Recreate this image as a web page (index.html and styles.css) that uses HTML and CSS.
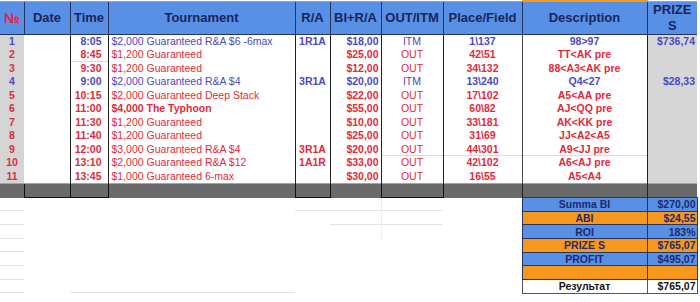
FILE: index.html
```html
<!DOCTYPE html>
<html>
<head>
<meta charset="utf-8">
<link rel="stylesheet" href="styles.css">
</head>
<body>
<table class="sheet">
  <colgroup>
    <col class="w-num"><col class="w-date"><col class="w-time"><col class="w-tour"><col class="w-ra">
    <col class="w-bi"><col class="w-out"><col class="w-place"><col class="w-desc"><col class="w-prize">
  </colgroup>
  <thead>
    <tr>
      <th class="h-num">№</th><th>Date</th><th>Time</th><th>Tournament</th><th>R/A</th>
      <th>BI+R/A</th><th>OUT/ITM</th><th>Place/Field</th><th class="h-desc">Description</th><th class="h-prize">PRIZE S</th>
    </tr>
  </thead>
  <tbody>
    <tr class="blue"><td class="num">1</td><td class="date"></td><td class="time">8:05</td><td class="tour">$2,000 Guaranteed R&amp;A $6 -6max</td><td class="ra">1R1A</td><td class="bi">$18,00</td><td class="out">ITM</td><td class="place">1\137</td><td class="desc">98&gt;97</td><td class="prize">$736,74</td></tr>
    <tr class="red"><td class="num">2</td><td class="date"></td><td class="time gl">8:45</td><td class="tour">$1,200 Guaranteed</td><td class="ra"></td><td class="bi">$25,00</td><td class="out">OUT</td><td class="place">42\51</td><td class="desc">TT&lt;AK pre</td><td class="prize"></td></tr>
    <tr class="red"><td class="num">3</td><td class="date"></td><td class="time">9:30</td><td class="tour">$1,200 Guaranteed</td><td class="ra"></td><td class="bi">$12,00</td><td class="out">OUT</td><td class="place">34\132</td><td class="desc">88&lt;A3&lt;AK pre</td><td class="prize"></td></tr>
    <tr class="blue"><td class="num">4</td><td class="date"></td><td class="time">9:00</td><td class="tour">$2,000 Guaranteed R&amp;A $4</td><td class="ra">3R1A</td><td class="bi">$20,00</td><td class="out">ITM</td><td class="place">13\240</td><td class="desc">Q4&lt;27</td><td class="prize">$28,33</td></tr>
    <tr class="red"><td class="num">5</td><td class="date"></td><td class="time">10:15</td><td class="tour">$2,000 Guaranteed Deep Stack</td><td class="ra"></td><td class="bi">$22,00</td><td class="out">OUT</td><td class="place">17\102</td><td class="desc">A5&lt;AA pre</td><td class="prize"></td></tr>
    <tr class="red"><td class="num">6</td><td class="date"></td><td class="time">11:00</td><td class="tour strong">$4,000 The Typhoon</td><td class="ra"></td><td class="bi">$55,00</td><td class="out">OUT</td><td class="place">60\82</td><td class="desc">AJ&lt;QQ pre</td><td class="prize"></td></tr>
    <tr class="red"><td class="num">7</td><td class="date"></td><td class="time">11:30</td><td class="tour">$1,200 Guaranteed</td><td class="ra"></td><td class="bi">$10,00</td><td class="out">OUT</td><td class="place">33\181</td><td class="desc">AK&lt;KK pre</td><td class="prize"></td></tr>
    <tr class="red"><td class="num">8</td><td class="date"></td><td class="time">11:40</td><td class="tour">$1,200 Guaranteed</td><td class="ra"></td><td class="bi">$25,00</td><td class="out">OUT</td><td class="place">31\69</td><td class="desc">JJ&lt;A2&lt;A5</td><td class="prize"></td></tr>
    <tr class="red"><td class="num">9</td><td class="date"></td><td class="time">12:00</td><td class="tour">$3,000 Guaranteed R&amp;A $4</td><td class="ra">3R1A</td><td class="bi">$20,00</td><td class="out gl">OUT</td><td class="place gl">44\301</td><td class="desc gl">A9&lt;JJ pre</td><td class="prize"></td></tr>
    <tr class="red"><td class="num">10</td><td class="date"></td><td class="time">13:10</td><td class="tour">$2,000 Guaranteed R&amp;A $12</td><td class="ra">1A1R</td><td class="bi">$33,00</td><td class="out">OUT</td><td class="place">42\102</td><td class="desc">A6&lt;AJ pre</td><td class="prize"></td></tr>
    <tr class="red"><td class="num">11</td><td class="date"></td><td class="time">13:45</td><td class="tour">$1,000 Guaranteed 6-max</td><td class="ra"></td><td class="bi">$30,00</td><td class="out">OUT</td><td class="place">16\55</td><td class="desc">A5&lt;A4</td><td class="prize"></td></tr>
    <tr class="band"><td></td><td class="boxed"></td><td class="boxed"></td><td></td><td class="boxed"></td><td></td><td class="boxed"></td><td></td><td class="bl"></td><td class="bl"></td></tr>
    <tr class="sum"><td class="fl"></td><td></td><td></td><td></td><td class="fl"></td><td class="fl fr"></td><td class="fl fv"></td><td></td><td class="s-label sb">Summa BI</td><td class="s-val sb">$270,00</td></tr>
    <tr class="sum"><td class="fl"></td><td></td><td></td><td></td><td></td><td class="fl fr"></td><td class="fl fv"></td><td></td><td class="s-label so">ABI</td><td class="s-val so">$24,55</td></tr>
    <tr class="sum"><td class="fl"></td><td></td><td></td><td></td><td></td><td></td><td class="fv"></td><td></td><td class="s-label sb">ROI</td><td class="s-val sb">183%</td></tr>
    <tr class="sum"><td class="fl"></td><td></td><td></td><td></td><td></td><td></td><td></td><td></td><td class="s-label so">PRIZE S</td><td class="s-val so">$765,07</td></tr>
    <tr class="sum"><td class="fl"></td><td></td><td></td><td></td><td></td><td></td><td></td><td></td><td class="s-label sb">PROFIT</td><td class="s-val sb">$495,07</td></tr>
    <tr class="sum"><td class="fl"></td><td></td><td></td><td></td><td></td><td></td><td></td><td></td><td class="s-label so"></td><td class="s-val so"></td></tr>
    <tr class="sum"><td class="fl"></td><td></td><td class="fl"></td><td class="fl"></td><td></td><td></td><td></td><td></td><td class="s-label sw">Результат</td><td class="s-val sw">$765,07</td></tr>
  </tbody>
</table>
</body>
</html>
```

FILE: styles.css
```css
html, body {
  margin: 0;
  padding: 0;
  background: #ffffff;
}

body {
  font-family: "Liberation Sans", Arial, sans-serif;
}

.sheet {
  border-collapse: collapse;
  table-layout: fixed;
  width: 697px;
}

.w-num { width: 24px; }
.w-date { width: 46px; }
.w-time { width: 38px; }
.w-tour { width: 187px; }
.w-ra { width: 35px; }
.w-bi { width: 51px; }
.w-out { width: 62px; }
.w-place { width: 79px; }
.w-desc { width: 125px; }
.w-prize { width: 50px; }

th {
  height: 31px;
  padding: 0;
  background: #5890e6;
  color: #1a245c;
  font-size: 13px;
  font-weight: bold;
  line-height: 16px;
  text-align: center;
  vertical-align: middle;
  border-left: 1px solid #27335e;
  border-bottom: 1px solid #27335e;
  border-top: 1px solid #7aa6ee;
}

th:first-child {
  border-left: none;
}

.h-num {
  color: #e61f3d;
  font-size: 14px;
}

.h-desc {
  border-top: 2px solid #f39a22;
}

.h-prize {
  line-height: 16px;
  vertical-align: top;
  padding-top: 0;
}

td {
  height: 13.5px;
  padding: 0 2px;
  font-size: 10.5px;
  line-height: 13px;
  white-space: nowrap;
  overflow: hidden;
}

.blue td { color: #4d48c4; }
.red td { color: #df2b3b; }

.num {
  background: #d5d5d5;
  text-align: center;
  font-weight: bold;
}

.time {
  border-left: 1px solid #222;
  text-align: right;
  padding-right: 6px;
  font-weight: bold;
}

.tour {
  border-left: 1px solid #222;
  padding-left: 3px;
}

.strong {
  font-weight: bold;
}

.ra {
  border-left: 1px solid #222;
  text-align: center;
  font-weight: bold;
}

.bi {
  border-left: 1px solid #222;
  text-align: right;
  padding-right: 2px;
  font-weight: bold;
}

.out {
  border-left: 1px solid #222;
  text-align: center;
}

.place {
  border-left: 1px solid #222;
  text-align: center;
  font-weight: bold;
}

.desc {
  border-left: 1px solid #444;
  text-align: center;
  font-weight: bold;
}

.prize {
  border-left: 1px solid #222;
  background: #d6d6d6;
  text-align: right;
  padding-right: 2px;
  font-weight: bold;
}

.gl {
  box-shadow: inset 0 -1px 0 #dadada;
}

.band td {
  height: 13px;
  padding: 0;
  background: #6a6a6a;
  border-top: 1px solid #a4a4a4;
}

.band td.boxed {
  border-left: 1px solid #111;
  border-right: 1px solid #111;
  border-bottom: 1px solid #111;
}

.band td.bl {
  border-left: 1px solid #222;
}

.sum td {
  height: 12.7px;
  padding: 0 1px;
  font-size: 10.5px;
  line-height: 12px;
}

.sum td.fl {
  box-shadow: inset 0 -1px 0 #e3e3e3;
}

.sum td.fr {
  border-right: 1px solid #ececec;
}

.sum td.fv {
  border-left: 1px solid #ececec;
}

.s-label {
  text-align: center;
  font-weight: bold;
  color: #1d2a70;
  border: 1px solid #2a3460;
}

.s-val {
  text-align: right;
  font-weight: bold;
  color: #1d2a70;
  border: 1px solid #2a3460;
}

.sb { background: #5890e6; }
.so { background: #f6981e; }

.sum td.sw {
  background: #ffffff;
  color: #141414;
  border: 1px solid #555;
}
```
